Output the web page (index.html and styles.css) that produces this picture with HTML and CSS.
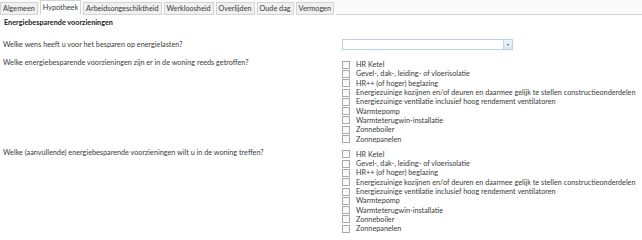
FILE: index.html
```html
<!DOCTYPE html>
<html lang="nl">
<head>
    <meta charset="UTF-8">
    <title>Hypotheek - Energiebesparende voorzieningen</title>
    <link rel="stylesheet" href="styles.css">
</head>
<body>
    <div class="tabs">
        <div class="tab">Algemeen</div>
        <div class="tab active">Hypotheek</div>
        <div class="tab">Arbeidsongeschiktheid</div>
        <div class="tab">Werkloosheid</div>
        <div class="tab">Overlijden</div>
        <div class="tab">Oude dag</div>
        <div class="tab">Vermogen</div>
        <div class="tab-rest"></div>
    </div>

    <div class="content">
        <h1>Energiebesparende voorzieningen</h1>

        <div class="row row-select">
            <div class="question">Welke wens heeft u voor het besparen op energielasten?</div>
            <div class="combo">
                <div class="combo-value"></div>
                <div class="combo-button"><span class="arrow"></span></div>
            </div>
        </div>

        <div class="row">
            <div class="question">Welke energiebesparende voorzieningen zijn er in de woning reeds getroffen?</div>
            <ul class="checklist">
                <li><span class="box"></span>HR Ketel</li>
                <li><span class="box"></span>Gevel-, dak-, leiding- of vloerisolatie</li>
                <li><span class="box"></span>HR++ (of hoger) beglazing</li>
                <li><span class="box"></span>Energiezuinige kozijnen en/of deuren en daarmee gelijk te stellen constructieonderdelen</li>
                <li><span class="box"></span>Energiezuinige ventilatie inclusief hoog rendement ventilatoren</li>
                <li><span class="box"></span>Warmtepomp</li>
                <li><span class="box"></span>Warmteterugwin-installatie</li>
                <li><span class="box"></span>Zonneboiler</li>
                <li><span class="box"></span>Zonnepanelen</li>
            </ul>
        </div>

        <div class="row">
            <div class="question">Welke (aanvullende) energiebesparende voorzieningen wilt u in de woning treffen?</div>
            <ul class="checklist">
                <li><span class="box"></span>HR Ketel</li>
                <li><span class="box"></span>Gevel-, dak-, leiding- of vloerisolatie</li>
                <li><span class="box"></span>HR++ (of hoger) beglazing</li>
                <li><span class="box"></span>Energiezuinige kozijnen en/of deuren en daarmee gelijk te stellen constructieonderdelen</li>
                <li><span class="box"></span>Energiezuinige ventilatie inclusief hoog rendement ventilatoren</li>
                <li><span class="box"></span>Warmtepomp</li>
                <li><span class="box"></span>Warmteterugwin-installatie</li>
                <li><span class="box"></span>Zonneboiler</li>
                <li><span class="box"></span>Zonnepanelen</li>
            </ul>
        </div>
    </div>
</body>
</html>
```

FILE: styles.css
```css
body {
    margin: 0;
    font-family: Lato, "Open Sans", sans-serif;
    font-size: 7.25px;
    color: #3a3a3a;
    background: #fff;
    overflow: hidden;
}
.tabs {
    display: flex;
    align-items: flex-end;
    height: 15px;
    background: #fafafa;
}
.tab {
    height: 13px;
    line-height: 12px;
    padding: 0 2px;
    margin-right: 2px;
    background: #f0f0f0;
    border: 1px solid #d4d4d4;
    box-sizing: border-box;
}
.tab.active {
    height: 15px;
    line-height: 13px;
    background: #fff;
    border-bottom-color: #fff;
}
.tab-rest {
    flex: 1;
    height: 1px;
    background: #d4d4d4;
}
.content {
    padding: 0 3px;
}
h1 {
    margin: 3px 0 0 1px;
    font-size: 7.25px;
    font-weight: bold;
    line-height: 10px;
    color: #222;
}
.row {
    display: grid;
    grid-template-columns: 339px 1fr;
    margin-top: 4px;
}
.row-select {
    margin-top: 11px;
    margin-bottom: 8px;
    align-items: center;
}
.question {
    line-height: 9.25px;
}
.checklist {
    list-style: none;
    margin: 2px 0 0 0;
    padding: 0;
}
.checklist li {
    display: flex;
    align-items: center;
    height: 9.3px;
    white-space: nowrap;
}
.combo {
    display: flex;
    width: 171px;
    height: 11px;
    border: 1px solid #bcd0e8;
    box-sizing: border-box;
    background: #fff;
}
.combo-value {
    flex: 1;
}
.combo-button {
    width: 8px;
    border-left: 1px solid #c5d6ea;
    background: linear-gradient(#edf3fa, #d9e5f3);
    display: flex;
    align-items: center;
    justify-content: center;
}
.arrow {
    width: 0;
    height: 0;
    border-left: 1.5px solid transparent;
    border-right: 1.5px solid transparent;
    border-top: 2px solid #555;
}
.box {
    width: 8px;
    height: 8px;
    margin-right: 6px;
    border: 1px solid #a9a9a9;
    box-sizing: border-box;
    background: linear-gradient(#f4f4f4, #ffffff);
    flex-shrink: 0;
}
```
